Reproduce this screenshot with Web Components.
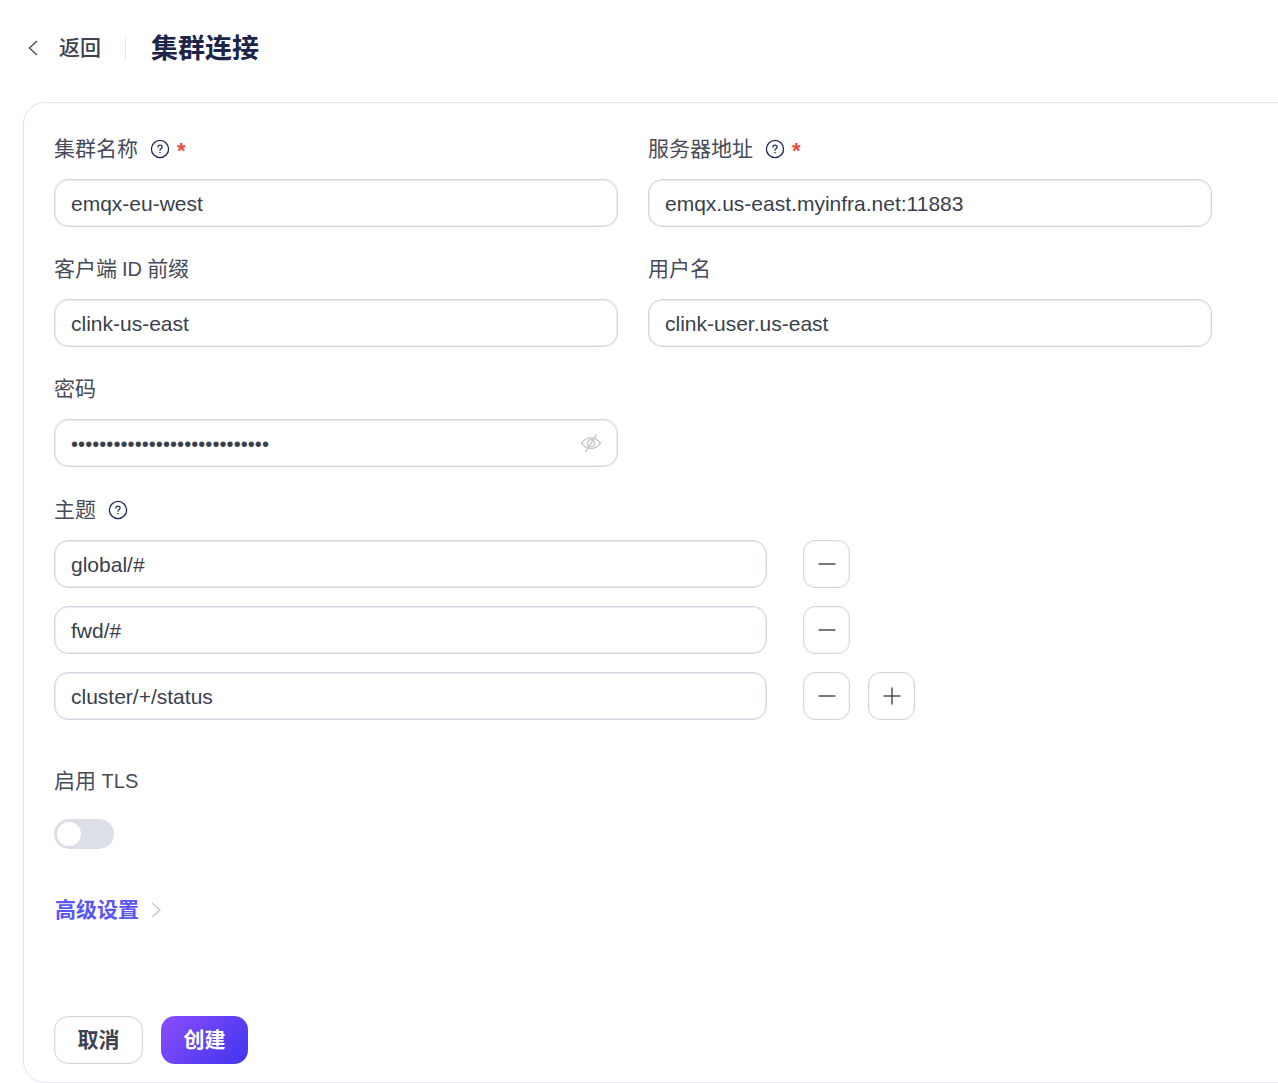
<!DOCTYPE html>
<html lang="zh-CN">
<head>
<meta charset="utf-8">
<title>集群连接</title>
<style>
html,body{margin:0;height:1083px;overflow:hidden;background:#fff}
body{font-family:"Inter","Noto Sans CJK SC",sans-serif;color:#3d4250}
</style>
</head>
<body>
<cluster-page></cluster-page>
<script>
function def(name, css, html){
  customElements.define(name, class extends HTMLElement{
    connectedCallback(){
      if(this.shadowRoot) return;
      const r=this.attachShadow({mode:'open'});
      r.innerHTML='<style>'+css+'</style>'+(typeof html==='function'?html(this):html);
    }
  });
}
const FONT='"Liberation Sans","Noto Sans CJK SC",sans-serif';
def('help-icon',`:host{display:inline-flex;width:20px;height:20px}svg{display:block}`,
`<svg width="20" height="20" viewBox="0 0 20 20" fill="none"><circle cx="10" cy="10" r="8.6" stroke="#1d2550" stroke-width="1.3"/><path d="M7.9 8.1c0-1.2.9-2 2.1-2s2.1.8 2.1 1.9c0 .9-.5 1.3-1.1 1.7-.6.4-1 .8-1 1.6" stroke="#1d2550" stroke-width="1.2" stroke-linecap="round"/><circle cx="10" cy="13.7" r=".8" fill="#1d2550"/></svg>`);
def('field-label',`:host{display:flex;align-items:center;height:30px;font:21px/30px ${FONT};color:#474b59;margin-bottom:15px}
.l{white-space:pre}.h{display:inline-flex;margin-left:12px}.s{color:#f0483e;margin-left:7px;font:bold 22px/30px "Liberation Sans",sans-serif;padding-top:3px}`,
e=>`<span class="l"><slot></slot></span>${e.hasAttribute('help')?'<span class="h"><help-icon></help-icon></span>':''}${e.hasAttribute('required')?'<span class="s">*</span>':''}`);
def('text-box',`:host{display:flex;align-items:center;box-sizing:border-box;height:48px;border:1px solid #d1d5df;box-shadow:inset 0 0 0 1px rgba(213,216,226,.45);border-radius:14px;padding:2px 16px 0;background:#fff;font:21px/30px ${FONT};color:#3a3f4c}
.t{flex:1;white-space:nowrap}
.d{font-size:20px;letter-spacing:.07px;color:#3a3f4c}
svg{display:block;margin:-2px -2px 0 0}`,
e=>e.hasAttribute('password')?`<span class="t d"><slot></slot></span><svg width="24" height="24" viewBox="0 0 24 24" fill="none" stroke="#c2c4c9" stroke-width="1.3" stroke-linecap="round" stroke-linejoin="round"><path d="M2.5 12.2C5 8.6 8.2 6.8 12 6.8s7 1.800 9.500 5.400C19 15.800 15.800 17.600 12 17.600S5 15.800 2.500 12.200Z"/><circle cx="12" cy="12.200" r="3.600"/><path d="M17.300 3.800 6.700 20.600"/></svg>`:`<span class="t"><slot></slot></span>`);
def('form-field',`:host{display:block;margin-bottom:27px;min-width:0}`,`<slot></slot>`);
def('form-row',`:host{display:grid;grid-template-columns:564px 564px;column-gap:30px;margin-bottom:28px}
::slotted(form-field:last-child){margin-bottom:0}`,`<slot></slot>`);
def('icon-button',`:host{display:flex;align-items:center;justify-content:center;box-sizing:border-box;width:47px;height:48px;border:1px solid #d3d6e0;box-shadow:inset 0 0 0 1px rgba(213,216,226,.2);border-radius:12px;background:#fff}svg{display:block}`,
e=>`<svg width="20" height="20" viewBox="0 0 20 20" fill="none" stroke="#3d4250" stroke-width="1.4"><path d="M1.500 10h17"/>${e.getAttribute('kind')==='plus'?'<path d="M10 1.500v17"/>':''}</svg>`);
def('topic-row',`:host{display:flex;align-items:center;margin-bottom:18px}
text-box{width:713px;margin-right:36px}.g{display:flex;gap:18px}`,
e=>`<text-box><slot></slot></text-box><span class="g"><icon-button></icon-button>${e.hasAttribute('add')?'<icon-button kind="plus"></icon-button>':''}</span>`);
def('toggle-switch',`:host{display:block;box-sizing:border-box;width:60px;height:30px;border-radius:15px;background:#dcdfe6;padding:3px}
i{display:block;width:24px;height:24px;border-radius:50%;background:#fff}`,`<i></i>`);
def('advanced-link',`:host{display:flex;align-items:center;height:30px;padding-left:1px;font:bold 21px/30px ${FONT};color:#5a55f5}
svg{margin-left:11px;display:block}`,`<slot></slot><svg width="12" height="20" viewBox="0 0 12 20" fill="none" stroke="#c3c6d4" stroke-width="1.4"><path d="M2 3l8 7-8 7"/></svg>`);
def('action-button',`:host{display:flex;align-items:center;justify-content:center;box-sizing:border-box;height:48px;border-radius:14px;font:bold 21px/30px ${FONT};width:89px;border:1px solid #d3d6e0;box-shadow:inset 0 0 0 1px rgba(213,216,226,.2);color:#3d4250;background:#fff}
:host([primary]){width:87px;border:0;box-shadow:none;color:#fff;background:linear-gradient(135deg,#8c4dfb,#3f35ee)}`,`<slot></slot>`);
def('page-header',`:host{display:flex;align-items:center;box-sizing:border-box;height:102px;padding:0 0 6px 27px}
svg{display:block;margin-right:20px}.b{font:500 21px/30px ${FONT};color:#3d4250}.s{width:1px;height:21px;background:#e3e5ea;margin:0 25px 0 24px}.t{font:bold 27px/36px ${FONT};color:#1c2448;padding-top:2px}`,
`<svg width="12" height="20" viewBox="0 0 12 20" fill="none" stroke="#4a4e5a" stroke-width="1.4"><path d="M10 3 2.500 10l7.500 7"/></svg><span class="b">返回</span><span class="s"></span><span class="t">集群连接</span>`);
def('form-card',`:host{display:block;box-sizing:border-box;height:981px;margin:0 -40px 0 23px;border:1px solid #e3e5ee;border-radius:22px;padding:31px 30px 0;background:#fff}`,`<slot></slot>`);
def('cluster-page',`:host{display:block}
.ad{margin-top:46px}.ac{display:flex;gap:18px;margin-top:91px}
field-label.tl{margin-top:46px;margin-bottom:23px}topic-row:last-of-type{margin-bottom:0}
.lat{font-size:20px}.id{word-spacing:-.5px}`,
`<page-header></page-header>
<form-card>
<form-row>
<form-field><field-label help required>集群名称</field-label><text-box>emqx-eu-west</text-box></form-field>
<form-field><field-label help required>服务器地址</field-label><text-box>emqx.us-east.myinfra.net:11883</text-box></form-field>
<form-field><field-label>客户端<span class="lat id"> ID </span>前缀</field-label><text-box>clink-us-east</text-box></form-field>
<form-field><field-label>用户名</field-label><text-box>clink-user.us-east</text-box></form-field>
<form-field><field-label>密码</field-label><text-box password>••••••••••••••••••••••••••••</text-box></form-field>
</form-row>
<field-label help>主题</field-label>
<section><topic-row>global/#</topic-row><topic-row>fwd/#</topic-row><topic-row add>cluster/+/status</topic-row></section>
<field-label class="tl">启用<span class="lat"> TLS</span></field-label>
<toggle-switch></toggle-switch>
<advanced-link class="ad">高级设置</advanced-link>
<div class="ac"><action-button>取消</action-button><action-button primary>创建</action-button></div>
</form-card>`);
</script>
</body>
</html>
